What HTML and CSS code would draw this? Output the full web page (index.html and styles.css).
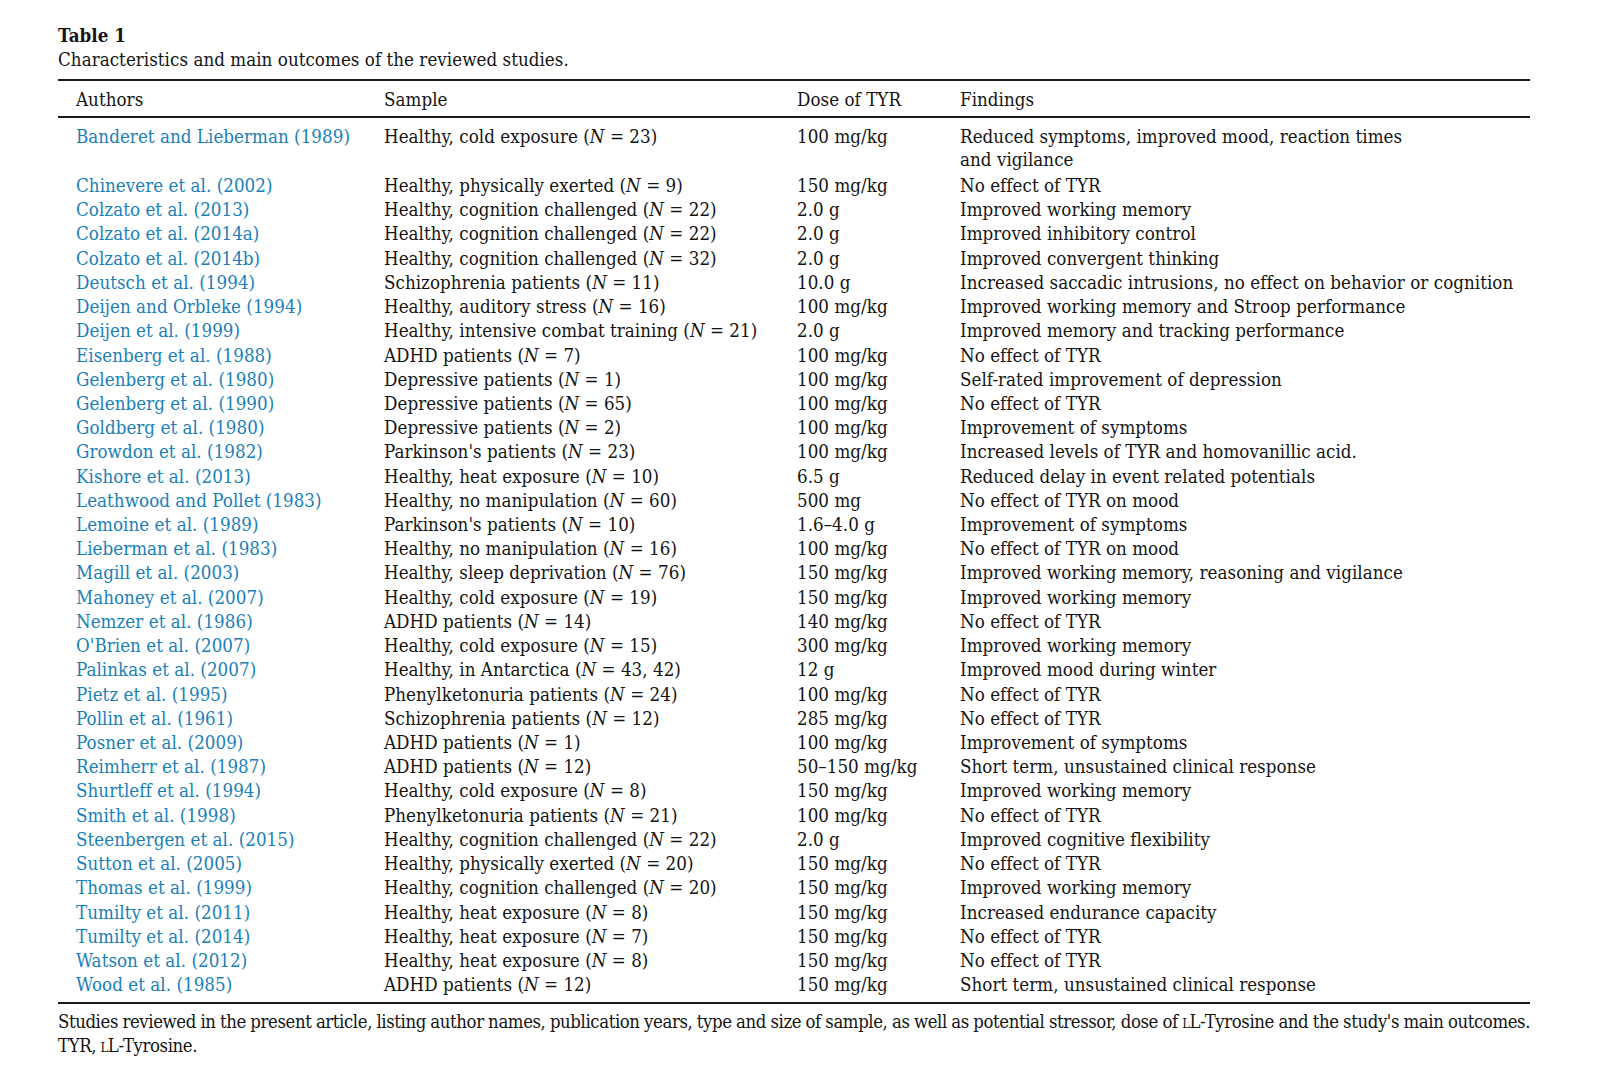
FILE: index.html
```html
<!DOCTYPE html>
<html lang="en">
<head>
<meta charset="utf-8">
<title>Table 1</title>
<link rel="stylesheet" href="styles.css">
</head>
<body>
<div class="page">
  <div class="caption">
    <div class="caption-title">Table 1</div>
    <div class="caption-text">Characteristics and main outcomes of the reviewed studies.</div>
  </div>
  <table class="studies">
    <colgroup>
      <col class="c-auth"><col class="c-samp"><col class="c-dose"><col class="c-find">
    </colgroup>
    <thead>
      <tr><th>Authors</th><th>Sample</th><th>Dose of TYR</th><th>Findings</th></tr>
    </thead>
    <tbody>
      <tr><td><a href="#">Banderet and Lieberman (1989)</a></td><td>Healthy, cold exposure (<i>N</i> = 23)</td><td>100 mg/kg</td><td>Reduced symptoms, improved mood, reaction times<br>and vigilance</td></tr>
      <tr><td><a href="#">Chinevere et al. (2002)</a></td><td>Healthy, physically exerted (<i>N</i> = 9)</td><td>150 mg/kg</td><td>No effect of TYR</td></tr>
      <tr><td><a href="#">Colzato et al. (2013)</a></td><td>Healthy, cognition challenged (<i>N</i> = 22)</td><td>2.0 g</td><td>Improved working memory</td></tr>
      <tr><td><a href="#">Colzato et al. (2014a)</a></td><td>Healthy, cognition challenged (<i>N</i> = 22)</td><td>2.0 g</td><td>Improved inhibitory control</td></tr>
      <tr><td><a href="#">Colzato et al. (2014b)</a></td><td>Healthy, cognition challenged (<i>N</i> = 32)</td><td>2.0 g</td><td>Improved convergent thinking</td></tr>
      <tr><td><a href="#">Deutsch et al. (1994)</a></td><td>Schizophrenia patients (<i>N</i> = 11)</td><td>10.0 g</td><td>Increased saccadic intrusions, no effect on behavior or cognition</td></tr>
      <tr><td><a href="#">Deijen and Orbleke (1994)</a></td><td>Healthy, auditory stress (<i>N</i> = 16)</td><td>100 mg/kg</td><td>Improved working memory and Stroop performance</td></tr>
      <tr><td><a href="#">Deijen et al. (1999)</a></td><td>Healthy, intensive combat training (<i>N</i> = 21)</td><td>2.0 g</td><td>Improved memory and tracking performance</td></tr>
      <tr><td><a href="#">Eisenberg et al. (1988)</a></td><td>ADHD patients (<i>N</i> = 7)</td><td>100 mg/kg</td><td>No effect of TYR</td></tr>
      <tr><td><a href="#">Gelenberg et al. (1980)</a></td><td>Depressive patients (<i>N</i> = 1)</td><td>100 mg/kg</td><td>Self-rated improvement of depression</td></tr>
      <tr><td><a href="#">Gelenberg et al. (1990)</a></td><td>Depressive patients (<i>N</i> = 65)</td><td>100 mg/kg</td><td>No effect of TYR</td></tr>
      <tr><td><a href="#">Goldberg et al. (1980)</a></td><td>Depressive patients (<i>N</i> = 2)</td><td>100 mg/kg</td><td>Improvement of symptoms</td></tr>
      <tr><td><a href="#">Growdon et al. (1982)</a></td><td>Parkinson's patients (<i>N</i> = 23)</td><td>100 mg/kg</td><td>Increased levels of TYR and homovanillic acid.</td></tr>
      <tr><td><a href="#">Kishore et al. (2013)</a></td><td>Healthy, heat exposure (<i>N</i> = 10)</td><td>6.5 g</td><td>Reduced delay in event related potentials</td></tr>
      <tr><td><a href="#">Leathwood and Pollet (1983)</a></td><td>Healthy, no manipulation (<i>N</i> = 60)</td><td>500 mg</td><td>No effect of TYR on mood</td></tr>
      <tr><td><a href="#">Lemoine et al. (1989)</a></td><td>Parkinson's patients (<i>N</i> = 10)</td><td>1.6–4.0 g</td><td>Improvement of symptoms</td></tr>
      <tr><td><a href="#">Lieberman et al. (1983)</a></td><td>Healthy, no manipulation (<i>N</i> = 16)</td><td>100 mg/kg</td><td>No effect of TYR on mood</td></tr>
      <tr><td><a href="#">Magill et al. (2003)</a></td><td>Healthy, sleep deprivation (<i>N</i> = 76)</td><td>150 mg/kg</td><td>Improved working memory, reasoning and vigilance</td></tr>
      <tr><td><a href="#">Mahoney et al. (2007)</a></td><td>Healthy, cold exposure (<i>N</i> = 19)</td><td>150 mg/kg</td><td>Improved working memory</td></tr>
      <tr><td><a href="#">Nemzer et al. (1986)</a></td><td>ADHD patients (<i>N</i> = 14)</td><td>140 mg/kg</td><td>No effect of TYR</td></tr>
      <tr><td><a href="#">O'Brien et al. (2007)</a></td><td>Healthy, cold exposure (<i>N</i> = 15)</td><td>300 mg/kg</td><td>Improved working memory</td></tr>
      <tr><td><a href="#">Palinkas et al. (2007)</a></td><td>Healthy, in Antarctica (<i>N</i> = 43, 42)</td><td>12 g</td><td>Improved mood during winter</td></tr>
      <tr><td><a href="#">Pietz et al. (1995)</a></td><td>Phenylketonuria patients (<i>N</i> = 24)</td><td>100 mg/kg</td><td>No effect of TYR</td></tr>
      <tr><td><a href="#">Pollin et al. (1961)</a></td><td>Schizophrenia patients (<i>N</i> = 12)</td><td>285 mg/kg</td><td>No effect of TYR</td></tr>
      <tr><td><a href="#">Posner et al. (2009)</a></td><td>ADHD patients (<i>N</i> = 1)</td><td>100 mg/kg</td><td>Improvement of symptoms</td></tr>
      <tr><td><a href="#">Reimherr et al. (1987)</a></td><td>ADHD patients (<i>N</i> = 12)</td><td>50–150 mg/kg</td><td>Short term, unsustained clinical response</td></tr>
      <tr><td><a href="#">Shurtleff et al. (1994)</a></td><td>Healthy, cold exposure (<i>N</i> = 8)</td><td>150 mg/kg</td><td>Improved working memory</td></tr>
      <tr><td><a href="#">Smith et al. (1998)</a></td><td>Phenylketonuria patients (<i>N</i> = 21)</td><td>100 mg/kg</td><td>No effect of TYR</td></tr>
      <tr><td><a href="#">Steenbergen et al. (2015)</a></td><td>Healthy, cognition challenged (<i>N</i> = 22)</td><td>2.0 g</td><td>Improved cognitive flexibility</td></tr>
      <tr><td><a href="#">Sutton et al. (2005)</a></td><td>Healthy, physically exerted (<i>N</i> = 20)</td><td>150 mg/kg</td><td>No effect of TYR</td></tr>
      <tr><td><a href="#">Thomas et al. (1999)</a></td><td>Healthy, cognition challenged (<i>N</i> = 20)</td><td>150 mg/kg</td><td>Improved working memory</td></tr>
      <tr><td><a href="#">Tumilty et al. (2011)</a></td><td>Healthy, heat exposure (<i>N</i> = 8)</td><td>150 mg/kg</td><td>Increased endurance capacity</td></tr>
      <tr><td><a href="#">Tumilty et al. (2014)</a></td><td>Healthy, heat exposure (<i>N</i> = 7)</td><td>150 mg/kg</td><td>No effect of TYR</td></tr>
      <tr><td><a href="#">Watson et al. (2012)</a></td><td>Healthy, heat exposure (<i>N</i> = 8)</td><td>150 mg/kg</td><td>No effect of TYR</td></tr>
      <tr><td><a href="#">Wood et al. (1985)</a></td><td>ADHD patients (<i>N</i> = 12)</td><td>150 mg/kg</td><td>Short term, unsustained clinical response</td></tr>
    </tbody>
  </table>
  <div class="footnote">
    <span class="fn-line">Studies reviewed in the present article, listing author names, publication years, type and size of sample, as well as potential stressor, dose of <span class="sc">l</span>L-Tyrosine and the study's main outcomes.</span>
    <span class="fn-line2">TYR, <span class="sc">l</span>L-Tyrosine.</span>
  </div>
</div>
</body>
</html>
```
FILE: styles.css
```css
html, body {
  margin: 0;
  padding: 0;
  background: #ffffff;
}

body {
  font-family: "DejaVu Serif Condensed", "DejaVu Serif", serif;
  font-stretch: condensed;
  color: #141414;
  font-size: 18.6px;
  letter-spacing: 0.04px;
}

.page {
  width: 1472px;
  padding: 24.4px 0 0 58px;
}

.caption {
  line-height: 23.4px;
  margin-bottom: 8px;
}

.caption-title {
  font-weight: bold;
}

.studies {
  width: 1472px;
  table-layout: fixed;
  border-collapse: collapse;
  border-top: 2px solid #1a1a1a;
  border-bottom: 2px solid #1a1a1a;
}

.c-auth { width: 326px; }
.c-samp { width: 413px; }
.c-dose { width: 163px; }
.c-find { width: 570px; }

.studies th,
.studies td {
  text-align: left;
  font-weight: normal;
  line-height: 23px;
  padding: 0.61px 0;
  white-space: nowrap;
  vertical-align: top;
}

.studies th:first-child,
.studies td:first-child {
  padding-left: 18px;
}

.studies thead th {
  padding-top: 6.6px;
  padding-bottom: 5.6px;
  border-bottom: 2px solid #1a1a1a;
}

.studies tbody tr:first-child td {
  padding-top: 6.6px;
  padding-bottom: 2.4px;
}

.studies tbody tr:last-child td {
  padding-bottom: 6px;
}

.studies a {
  color: #1a80b8;
  text-decoration: none;
}

.studies i {
  font-style: italic;
}

.footnote {
  margin-top: 6px;
  font-size: 18.4px;
  line-height: 23.6px;
  letter-spacing: -0.4px;
  word-spacing: -0.5px;
}

.fn-line {
  display: block;
  text-align: justify;
  text-align-last: justify;
  white-space: nowrap;
}

.fn-line2 {
  display: block;
}

.sc {
  font-variant: small-caps;
}
```
